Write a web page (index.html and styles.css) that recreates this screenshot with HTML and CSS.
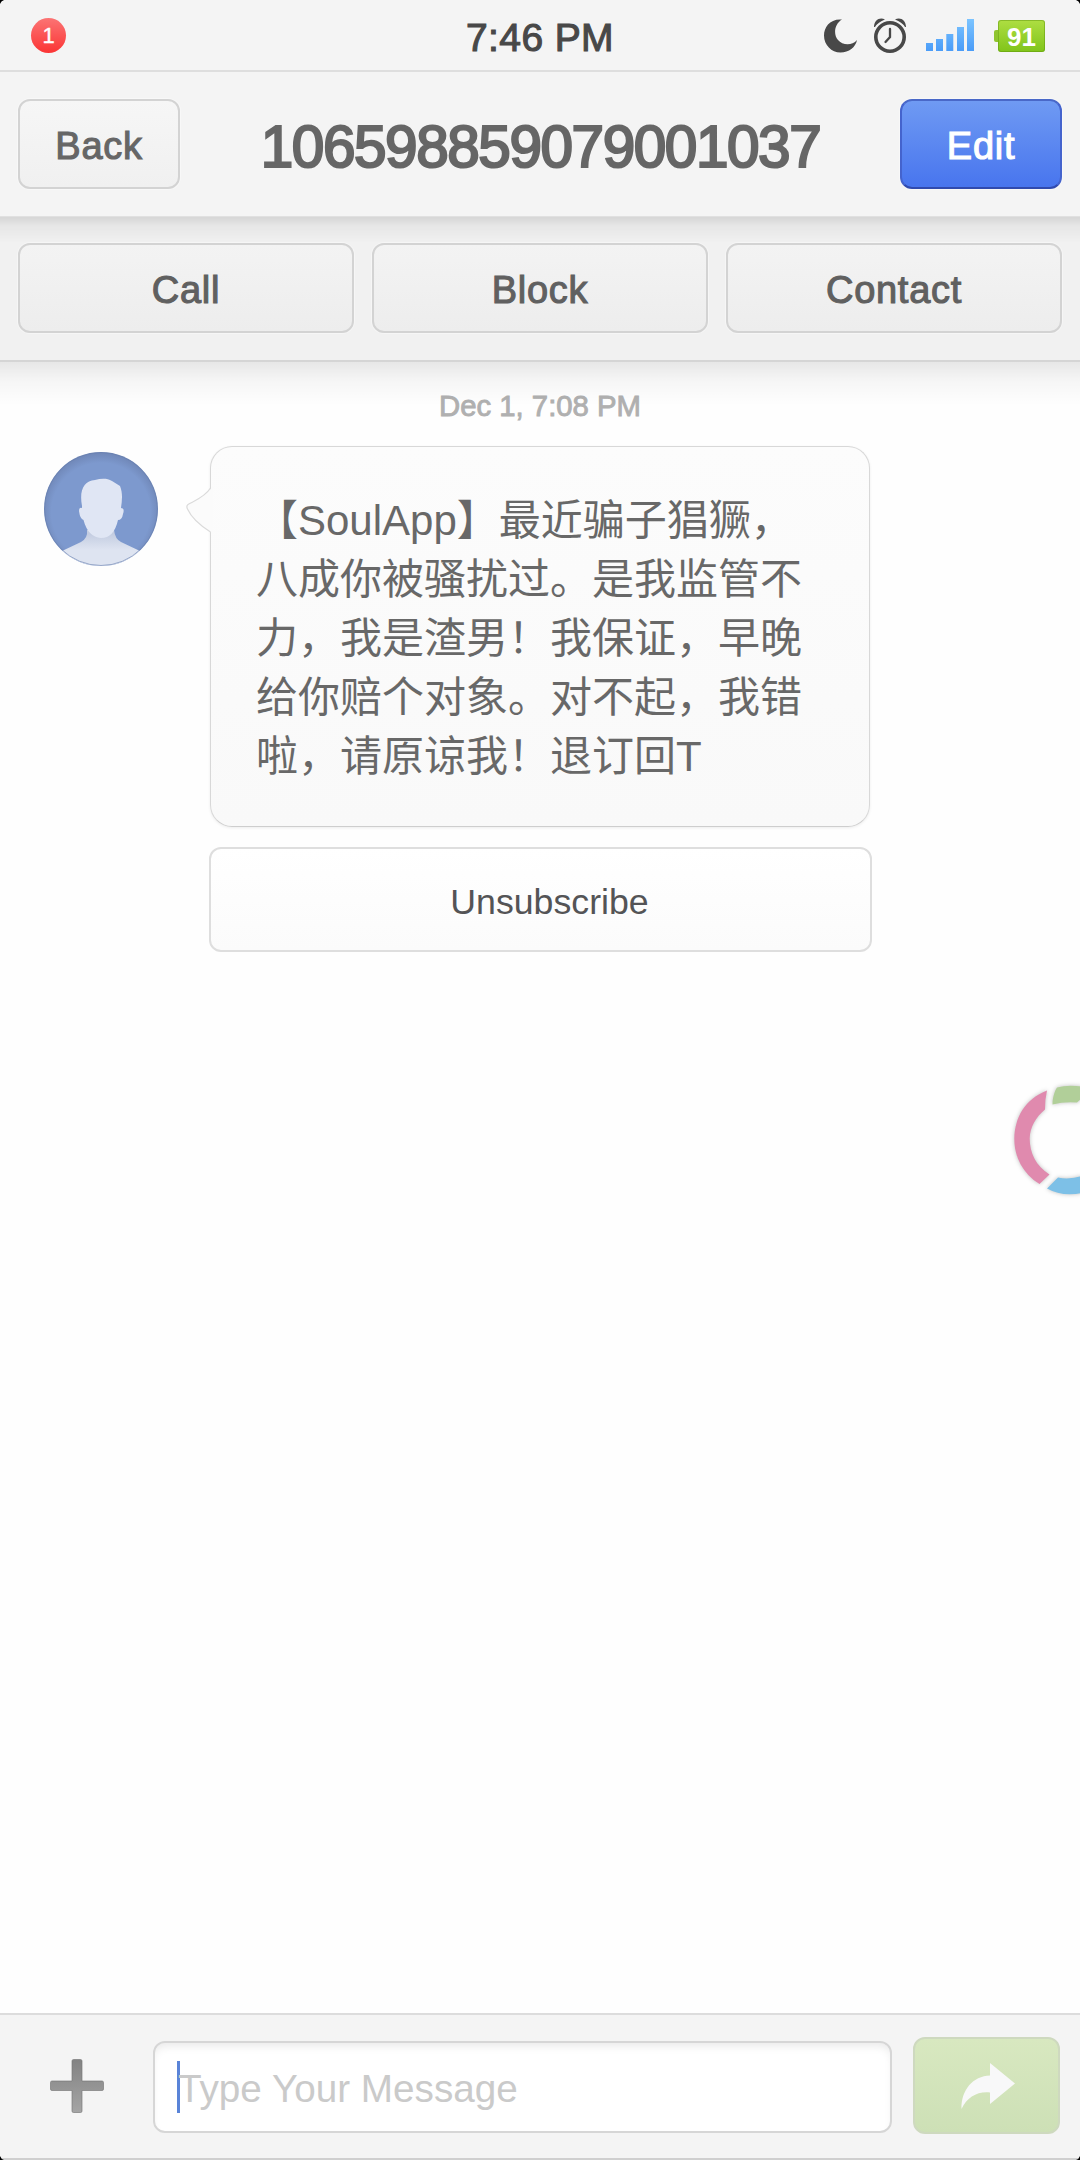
FILE: index.html
```html
<!DOCTYPE html>
<html lang="en">
<head>
<meta charset="utf-8">
<title>Messages</title>
<link rel="stylesheet" href="styles.css">
</head>
<body>
<div class="screen">
  <header class="status">
    <span class="badge">1</span>
    <span class="time">7:46 PM</span>
    <div class="indicators">
      <svg class="moon" width="34" height="34" viewBox="0 0 34 34"><path d="M18 .5C6-.5 0 8 0 16.500C0 26 7.500 33.500 16.500 33.500C25 33.500 31.500 28.500 33 21C28 27 18.500 26.500 14 21C9 15 10.500 5 18 .5Z" fill="#484848"/></svg>
      <svg class="alarm" width="32" height="36" viewBox="0 0 32 36" fill="none" stroke="#484848"><path d="M0 9C0 2 6-1.500 11 1.500Q4 4 1 9ZM32 9C32 2 26-1.500 21 1.500Q28 4 31 9Z" fill="#484848" stroke="none"/><circle cx="16" cy="19" r="14.200" stroke-width="3.600"/><path d="M16 11V19L11.500 24" stroke-width="2.300" stroke-linecap="round"/></svg>
      <svg class="signal" width="48" height="32" viewBox="0 0 48 32"><defs><linearGradient id="sg" gradientUnits="userSpaceOnUse" x1="0" y1="0" x2="0" y2="32"><stop stop-color="#7cc4ff"/><stop offset="1" stop-color="#4a9cf8"/></linearGradient></defs><path d="M0 24h7v8H0zM10 20h7v12h-7zM20.300 15h7v17h-7zM31 8h7v24h-7zM41 0h7v32h-7z" fill="url(#sg)"/></svg>
      <div class="battery"><span class="level">91</span></div>
    </div>
  </header>
  <nav class="navbar">
    <button class="btn back">Back</button>
    <h1 class="title">106598859079001037</h1>
    <button class="btn edit">Edit</button>
  </nav>
  <section class="actions">
    <button class="btn">Call</button>
    <button class="btn">Block</button>
    <button class="btn">Contact</button>
  </section>
  <main class="thread">
    <p class="date">Dec 1, 7:08 PM</p>
    <div class="row">
      <svg class="avatar" width="114" height="114" viewBox="0 0 114 114">
        <defs>
          <clipPath id="round"><circle cx="57" cy="57" r="57"/></clipPath>
          <radialGradient id="sky" cx=".5" cy=".53" r=".53"><stop offset=".82" stop-color="#7d99ce"/><stop offset="1" stop-color="#6f86b6"/></radialGradient>
          <linearGradient id="neck" gradientUnits="userSpaceOnUse" x1="0" y1="82" x2="0" y2="98"><stop stop-color="#c4cde1"/><stop offset="1" stop-color="#dee4f1"/></linearGradient>
        </defs>
        <g clip-path="url(#round)">
          <rect width="114" height="114" fill="url(#sky)"/>
          <path d="M43 78Q44 86 37 90L18 99V114H96V99L77 90Q71 87 70 78Z" fill="url(#neck)"/>
          <path d="M38 54C35 38 40 29 51 28C57 26.500 63 26 68 29L76 34C79 41 78 49 77 56Q81 56 79 62Q78 68 74 68Q70 86 57 86Q44 85 39.500 68Q36 67 35 59Q35 55 38 56Z" fill="#e0e6f4"/>
          <circle cx="57" cy="57" r="56.500" fill="none" stroke="#687eae" stroke-opacity=".6"/>
        </g>
      </svg>
      <div class="messages">
        <div class="bubble">
          <svg class="tail" width="27" height="48" viewBox="0 0 27 48"><path d="M27 0L24.500 2C19 10 8 14 2 17.500Q0 19 1.500 22C6 32 15 39 24.500 45L27 47Z" fill="#fbfbfb"/><path d="M24.500 1C19 10 8 14 2 17.500Q0 19 1.500 22C6 32 15 39 24.500 45" fill="none" stroke="#dadada" stroke-width="1.200"/></svg>
          <p class="text" lang="zh-CN">【SoulApp】最近骗子猖獗，<br>八成你被骚扰过。是我监管不<br>力，我是渣男！我保证，早晚<br>给你赔个对象。对不起，我错<br>啦，请原谅我！退订回T</p>
        </div>
        <button class="unsubscribe">Unsubscribe</button>
      </div>
    </div>
  </main>
  <footer class="composer">
    <svg class="plus" width="54" height="54" viewBox="0 0 54 54"><defs><linearGradient id="pg" x1="0" y1="0" x2="0" y2="1"><stop stop-color="#828282"/><stop offset="1" stop-color="#a5a5a5"/></linearGradient></defs><path d="M23.500 .5h7q1.500 0 1.500 1.500v20h20q1.500 0 1.500 1.500v6.500q0 1.500-1.500 1.500H32v20.500q0 1.500-1.500 1.500h-7q-1.500 0-1.500-1.500V31.500H2q-1.500 0-1.500-1.500v-6.500Q.5 22 2 22h20V2q0-1.500 1.500-1.500z" fill="url(#pg)" stroke="#777" stroke-opacity=".65"/></svg>
    <div class="field"><span class="caret"></span><span class="placeholder">Type Your Message</span></div>
    <button class="send"><svg width="54" height="46" viewBox="0 0 54 46"><path d="M29 0L54 20.500L29 41V29.500C17 28 6 34 .5 46C0 27 12 13 29 12.500Z" fill="#f8f8f9"/></svg></button>
  </footer>
  <svg class="floating" width="70" height="120" viewBox="1010 1080 70 120"><g class="ring"><path d="M1047 1090.500C1025 1099 1014.300 1118 1014.300 1139C1014.300 1157 1023 1174 1039.500 1184L1049.500 1174.500C1036 1166 1029.700 1153 1029.700 1138.500C1030 1127 1036 1117 1045 1109.500Q1045 1099 1047 1090.500Z" fill="#e08aae"/><path d="M1052.500 1104.500C1052.500 1098 1054.500 1091 1057 1087.500Q1067 1084.500 1082 1086.500V1098L1077 1102.500Q1064 1101.500 1052.500 1104.500Z" fill="#b1cf99"/><path d="M1047 1188.500L1058 1177.500Q1069 1180 1082 1176V1193Q1062 1197 1047 1188.500Z" fill="#7dc0e7"/></g></svg>
  <svg class="corners" width="1080" height="2160" viewBox="0 0 1080 2160"><path d="M0 0H4Q1 1 0 4ZM1080 0H1076Q1079 1 1080 4ZM0 2160H4Q1 2159 0 2156ZM1080 2160H1076Q1079 2159 1080 2156Z"/></svg>
</div>
</body>
</html>
```
FILE: styles.css
```css
* { box-sizing: border-box; }
body { margin: 0; font-family: "Liberation Sans", "Noto Sans CJK SC", sans-serif; }
h1, p { margin: 0; font-weight: 400; }
button { font-family: inherit; padding: 0; }

.screen {
  position: relative;
  width: 1080px;
  height: 2160px;
  display: flex;
  flex-direction: column;
  background: #fefefe;
  overflow: hidden;
}

.status {
  height: 72px;
  flex: none;
  display: grid;
  grid-template-columns: 1fr auto 1fr;
  padding: 0 35px 0 31px;
  background: #f4f4f4;
  border-bottom: 2px solid #dedede;
}
.badge {
  margin-top: 18px;
  width: 35px;
  height: 35px;
  border-radius: 50%;
  background: linear-gradient(#fb7474, #fb3434);
  color: #fff;
  font-size: 22px;
  line-height: 35px;
  text-align: center;
  -webkit-text-stroke: .4px #fff;
}
.time {
  padding-left: 4px;
  font-size: 39px;
  letter-spacing: .4px;
  line-height: 75px;
  color: #484848;
  -webkit-text-stroke: 1.1px #484848;
}
.indicators { display: flex; justify-content: flex-end; align-items: flex-start; }
.moon { margin: 19px 16px 0 0; }
.alarm { margin: 18px 20px 0 0; }
.signal { margin: 19px 20px 0 0; }
.battery {
  display: flex;
  align-items: center;
  margin-top: 20px;
}
.battery::before {
  content: "";
  width: 4px;
  height: 12px;
  border-radius: 2px 0 0 2px;
  background: #8fc42e;
}
.level {
  width: 47px;
  height: 32px;
  border-radius: 3px;
  background: linear-gradient(#aede42, #80c41a);
  box-shadow: inset 0 0 0 1px rgba(90, 145, 10, .45);
  color: #fff;
  font-weight: 700;
  font-size: 26px;
  line-height: 34px;
  text-align: center;
}

.navbar {
  position: relative;
  height: 144px;
  flex: none;
  display: flex;
  justify-content: space-between;
  align-items: center;
  padding: 0 18px;
  background: #f4f4f4;
  z-index: 2;
}
/* soft shade cast on whatever lies below the bar */
.navbar::after, .actions::after {
  content: "";
  position: absolute;
  left: 0;
  right: 0;
  top: 100%;
  pointer-events: none;
}
.navbar::after {
  height: 26px;
  border-top: 1px solid rgba(0, 0, 0, .07);
  background: linear-gradient(rgba(0, 0, 0, .115), rgba(0, 0, 0, .045) 35%, transparent);
}
.btn {
  height: 90px;
  border: 2px solid #d3d3d3;
  border-radius: 12px;
  background: linear-gradient(#f3f3f3, #ededed);
  box-shadow: 0 0 0 1px rgba(255, 255, 255, .35);
  color: #606060;
  font-size: 38px;
  letter-spacing: .7px;
  padding-top: 4px;
  -webkit-text-stroke: 1.1px currentColor;
}
.back, .edit { width: 162px; color: #666; }
.back { background: linear-gradient(#f6f6f6, #f0f0f0); }
.edit {
  color: #fff;
  border-color: #4968c8 #4463cd #304aae;
  background: linear-gradient(#6f9af3, #4875ee);
}
.title {
  font-size: 58.500px;
  letter-spacing: -1.450px;
  color: #666;
  line-height: 80px;
  padding: 5px 0 0 1px;
  -webkit-text-stroke: 2.2px #666;
}

.actions {
  position: relative;
  height: 146px;
  flex: none;
  display: grid;
  grid-template-columns: repeat(3, 1fr);
  gap: 18px;
  padding: 27px 18px 0;
  background: #f1f1f1;
  border-bottom: 2px solid #d5d5d5;
  z-index: 1;
}
.actions::after {
  top: calc(100% + 2px);
  height: 44px;
  background: linear-gradient(rgba(0, 0, 0, .09), rgba(0, 0, 0, .03) 45%, transparent);
}

.thread { flex: 1; padding-top: 24px; }
.date {
  font-size: 29.300px;
  line-height: 40px;
  text-align: center;
  color: #b0b0b0;
  -webkit-text-stroke: .9px #b0b0b0;
}
.row { display: flex; padding: 20px 0 0 44px; }
.avatar { margin-top: 6px; }
.messages { margin-left: 51px; width: 663px; }
.bubble {
  position: relative;
  margin: 0 2px 0 1px;
  height: 381px;
  padding: 44px 0 0 45px;
  border: 1px solid #d8d8d8;
  border-bottom-color: #cecece;
  border-radius: 22px;
  background: linear-gradient(#fcfcfc, #f9f9f9);
  box-shadow: 0 1px 3px rgba(0, 0, 0, .07);
}
.tail { position: absolute; left: -25px; top: 40px; }
.text { font-size: 42px; line-height: 59px; color: #686868; white-space: nowrap; text-spacing-trim: space-all; }
.unsubscribe {
  margin-top: 20px;
  width: 663px;
  height: 105px;
  border: 2px solid #dedede;
  border-radius: 12px;
  background: linear-gradient(#fff, #fbfbfb);
  color: #545456;
  font-size: 35.700px;
  padding: 5px 0 0 18px;
}

.composer {
  height: 147px;
  flex: none;
  display: flex;
  align-items: flex-start;
  padding-left: 50px;
  background: #f4f4f4;
  border-top: 2px solid #dcdcdc;
  border-bottom: 2px solid #cfcfcf;
}
.plus { margin-top: 44px; }
.field {
  display: flex;
  align-items: center;
  margin: 26px 0 0 49px;
  width: 739px;
  height: 92px;
  padding-left: 22px;
  border: 2px solid #d6d6d6;
  border-radius: 12px;
  background: #fff;
  box-shadow: inset 0 6px 10px -3px rgba(0, 0, 0, .09);
}
.caret { width: 3px; height: 52px; background: #5a84d8; }
.placeholder { margin-left: -2px; padding-top: 4px; font-size: 38.700px; color: #cacaca; }
.send {
  display: flex;
  align-items: center;
  justify-content: center;
  margin: 22px 0 0 21px;
  width: 147px;
  height: 97px;
  border: 2px solid #ced9bf;
  border-radius: 12px;
  background: linear-gradient(#d8e8c0, #cde0b6);
}
.send svg { margin-right: -2px; }

.floating { position: absolute; left: 1010px; top: 1080px; }
.ring { filter: drop-shadow(0 0 2px rgba(0, 0, 0, .25)); }
.corners { position: absolute; left: 0; top: 0; z-index: 3; pointer-events: none; }
```
